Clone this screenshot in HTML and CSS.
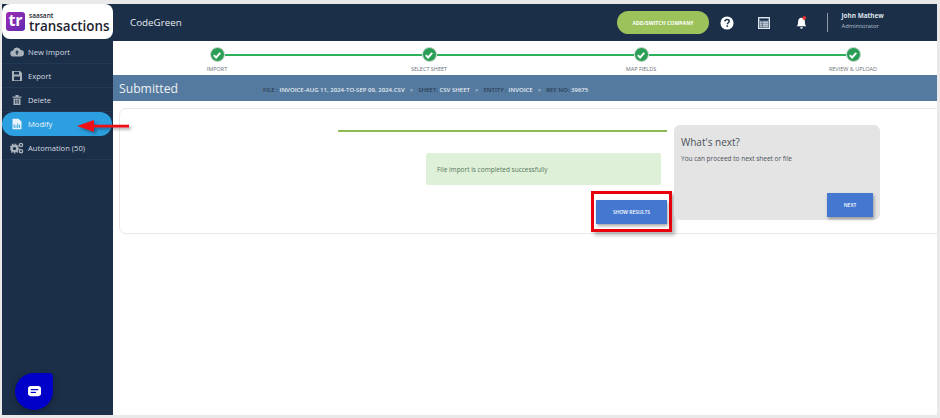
FILE: index.html
```html
<!DOCTYPE html>
<html lang="en">
<head>
<meta charset="utf-8">
<title>SaasAnt Transactions</title>
<link rel="stylesheet" href="styles.css">
</head>
<body>
<div class="frame">
  <header class="topbar">
    <div class="logo">
      <span class="logo-mark">tr</span>
      <span class="logo-words"><span class="logo-small">saasant</span><span class="logo-big">transactions</span></span>
    </div>
    <div class="company">CodeGreen</div>
    <button class="switch">ADD/SWITCH COMPANY</button>
    <svg class="ico-help" viewBox="0 0 16 16"><circle cx="8" cy="8" r="7.5" fill="#fff"/><path d="M5.600 6.200C5.700 4.800 6.700 4 8.100 4c1.400 0 2.400.8 2.400 2 0 1-.6 1.500-1.300 2-.6.4-.8.7-.8 1.400" fill="none" stroke="#1b2f49" stroke-width="1.700"/><rect x="7.400" y="10.600" width="1.800" height="1.800" fill="#1b2f49"/></svg>
    <svg class="ico-table" viewBox="0 0 12 12"><rect x=".5" y=".5" width="11" height="11" fill="#6f8296" stroke="#dfe6ee"/><rect x="2" y="2" width="8" height="1.600" fill="#1b2f49"/><path d="M2 5.200h1.600M5 5.200h5M2 7.200h1.600M5 7.200h5M2 9.200h1.600M5 9.200h5" stroke="#dfe6ee"/></svg>
    <svg class="ico-bell" viewBox="0 0 14 16"><path d="M7 2.400c-2.500 0-3.600 1.900-3.600 4 0 2.600-.5 4-1.600 5.200h10.400C11.100 10.400 10.600 9 10.600 6.400c0-2.100-1.100-4-3.600-4z" fill="#fff"/><path d="M5.500 12.600h3c0 1-.6 1.600-1.500 1.600s-1.500-.6-1.500-1.600z" fill="#fff"/><circle cx="10" cy="2.500" r="2" fill="#e8312f"/></svg>
    <div class="divider"></div>
    <div class="user"><span class="user-name">John Mathew</span><span class="user-role">Administrator</span></div>
  </header>
  <div class="body">
    <nav class="side">
      <a class="item"><svg class="ico" viewBox="0 0 14 12"><path d="M3.500 10.500a3 3 0 0 1-.4-6A4 4 0 0 1 10.700 4a3.200 3.200 0 0 1 0 6.500z" fill="#a9b1ba"/><path d="M7 4.200l2 2.300H7.700v2.200H6.300V6.500H5z" fill="#1b2f49"/></svg>New Import</a>
      <a class="item"><svg class="ico" viewBox="0 0 14 12"><path d="M2 1h8l2 2v8H2z" fill="#a9b1ba"/><rect x="4" y="1.800" width="5" height="2.700" fill="#1b2f49"/><rect x="4" y="6.500" width="6" height="3.700" fill="#1b2f49"/></svg>Export</a>
      <a class="item"><svg class="ico" viewBox="0 0 14 12"><path d="M2.500 2.500h9v1.200h-9zM5.500 1h3v1.500h-3z" fill="#a9b1ba"/><path d="M3.500 4.500h7V11h-7z" fill="#a9b1ba"/><path d="M5.500 5.700v4M7 5.700v4M8.500 5.700v4" stroke="#1b2f49" stroke-width=".7"/></svg>Delete</a>
      <a class="item active"><svg class="ico" viewBox="0 0 14 12"><path d="M2.500.8h6L11.500 3.500v7.800h-9z" fill="#e8f2fa"/><path d="M4.200 9.800V6.500M6 9.800V7.500M7.800 9.800V5.600M9.600 9.800V7" stroke="#2c9fe0"/></svg>Modify</a>
      <a class="item"><svg class="ico" viewBox="0 0 14 12"><circle cx="4.500" cy="6.500" r="2.800" fill="none" stroke="#a9b1ba" stroke-width="2.400"/><circle cx="4.500" cy="6.500" r="4.500" fill="none" stroke="#a9b1ba" stroke-width="1.200" stroke-dasharray="1.500 1.500"/><circle cx="11" cy="3" r="1.600" fill="none" stroke="#a9b1ba" stroke-width="1.400"/><circle cx="11" cy="9.200" r="1.600" fill="none" stroke="#a9b1ba" stroke-width="1.400"/></svg>Automation (50)</a>
    </nav>
    <main class="main">
      <div class="stepper">
        <div class="step"><div class="rail"><span class="seg seg-off"></span><span class="tick"><svg viewBox="0 0 10 10"><path d="M1.800 5.200l2.300 2.300 4.200-4.700" fill="none" stroke="#fff" stroke-width="1.900"/></svg></span><span class="seg"></span></div><span class="step-label">IMPORT</span></div>
        <div class="step"><div class="rail"><span class="seg"></span><span class="tick"><svg viewBox="0 0 10 10"><path d="M1.800 5.200l2.300 2.300 4.200-4.700" fill="none" stroke="#fff" stroke-width="1.900"/></svg></span><span class="seg"></span></div><span class="step-label">SELECT SHEET</span></div>
        <div class="step"><div class="rail"><span class="seg"></span><span class="tick"><svg viewBox="0 0 10 10"><path d="M1.800 5.200l2.300 2.300 4.200-4.700" fill="none" stroke="#fff" stroke-width="1.900"/></svg></span><span class="seg"></span></div><span class="step-label">MAP FIELDS</span></div>
        <div class="step"><div class="rail"><span class="seg"></span><span class="tick"><svg viewBox="0 0 10 10"><path d="M1.800 5.200l2.300 2.300 4.200-4.700" fill="none" stroke="#fff" stroke-width="1.900"/></svg></span><span class="seg seg-off"></span></div><span class="step-label">REVIEW &amp; UPLOAD</span></div>
      </div>
      <div class="banner">
        <h1 class="title">Submitted</h1>
        <div class="crumbs">
          <span><b>FILE :</b> INVOICE-AUG 11, 2024-TO-SEP 09, 2024.CSV</span><i>&gt;</i>
          <span><b>SHEET:</b> CSV SHEET</span><i>&gt;</i>
          <span><b>ENTITY :</b> INVOICE</span><i>&gt;</i>
          <span><b>REF NO:</b> 39675</span>
        </div>
      </div>
      <section class="card">
        <div class="result">
          <div class="rule"></div>
          <div class="alert">File import is completed successfully</div>
          <div class="result-action"><div class="marked"><button class="btn btn-show">SHOW RESULTS</button></div></div>
        </div>
        <aside class="next">
          <h2 class="next-title">What's next?</h2>
          <p class="next-text">You can proceed to next sheet or file</p>
          <div class="next-action"><button class="btn btn-next">NEXT</button></div>
        </aside>
      </section>
    </main>
  </div>
  <svg class="arrow" viewBox="0 0 56 14"><path d="M54 5.800H19V1L2 7l17 6V8.400h35z" fill="#ee0f17"/></svg>
  <div class="chat"><svg viewBox="0 0 16 14"><rect x="1" y="1" width="14" height="11" rx="3" fill="#fff"/><path d="M4 5h8" stroke="#0000c8" stroke-width="1.300"/><path d="M4 8h5.500" stroke="#0000c8" stroke-width="1.300"/></svg></div>
</div>
</body>
</html>
```
FILE: styles.css
```css
* { box-sizing: border-box; }
html, body { margin: 0; height: 100%; overflow: hidden; }
body { background: #e9e9e9; font-family: "Open Sans", "Liberation Sans", sans-serif; }
.frame { position: relative; width: 935px; height: 411px; margin: 4px 0 0 2px; display: flex; flex-direction: column; background: #fff; overflow: hidden; }

.topbar { flex: none; height: 37px; background: #1b2f49; display: flex; align-items: center; color: #fff; }
.logo { flex: none; width: 111px; height: 35px; margin-top: -2px; background: #fff; border-radius: 8px; display: flex; align-items: center; padding-left: 4px; gap: 4px; }
.logo-mark { width: 19px; height: 19px; border-radius: 3px; background: linear-gradient(135deg, #a02bb5, #5e2bb0); color: #fff; font: 700 16px/17px "Open Sans", sans-serif; text-align: center; }
.logo-words { display: flex; flex-direction: column; gap: 1px; color: #1d2430; }
.logo-small { font: 600 6.500px/7px "Open Sans", sans-serif; }
.logo-big { font: 600 13.400px/12px "Open Sans", sans-serif; }
.company { flex: none; margin-left: 17px; font-size: 9.800px; color: #e7ebef; width: 487px; }
.switch { flex: none; width: 92px; height: 23px; border: 0; border-radius: 12px; background: #9bc25b; color: #fff; font: 700 5.200px "Open Sans", sans-serif; padding: 0; }
.ico-help { flex: none; width: 14px; height: 14px; margin-left: 11px; }
.ico-table { flex: none; width: 12px; height: 12px; margin-left: 24px; }
.ico-bell { flex: none; width: 13px; height: 16px; margin-left: 24.500px; }
.divider { flex: none; width: 1px; height: 19px; background: #8e9aa8; margin-left: 19.500px; }
.user { display: flex; flex-direction: column; margin-left: 13.500px; margin-top: -4px; }
.user-name { font-size: 6.400px; line-height: 8px; font-weight: 700; color: #dfe4ea; }
.user-role { font-size: 5.800px; line-height: 8px; margin-top: 2px; color: #b8c1cc; }

.body { flex: 1; display: flex; min-height: 0; }
.side { flex: none; width: 111px; background: #1b2f49; margin-top: -1px; }
.item { display: flex; align-items: center; height: 24px; font-size: 7.600px; font-weight: 500; color: #d5dae0; padding-left: 8px; border-bottom: 1px solid #223954; }
.item.active { background: #2c9fe0; border-radius: 12px; border-bottom: 0; color: #eef6fc; margin-right: 1px; }
.ico { width: 14px; height: 12px; margin-right: 4px; flex: none; }

.main { flex: 1; min-width: 0; overflow: hidden; }
.stepper { display: grid; grid-template-columns: repeat(4, 212px); margin-left: -2px; height: 34px; padding-top: 6px; }
.step { display: flex; flex-direction: column; align-items: center; }
.rail { width: 100%; display: flex; align-items: center; height: 15px; }
.seg { flex: 1; height: 2px; background: #2fb15b; }
.seg-off { background: transparent; }
.tick { flex: none; width: 15px; height: 15px; border-radius: 50%; background: #2a9e54; border: 1px solid #cfd6d2; display: flex; align-items: center; justify-content: center; }
.tick svg { width: 10px; height: 10px; }
.step-label { font-size: 5.500px; line-height: 7px; margin-top: 4px; color: #69717a; }

.banner { height: 26px; background: #557a9f; display: flex; align-items: center; padding-left: 6px; }
.title { margin: 0; flex: none; width: 144px; font-size: 12.200px; font-weight: 400; color: #edf1f5; }
.crumbs { display: flex; align-items: center; gap: 5px; font-size: 6.050px; font-weight: 600; color: #e4eaf1; margin-top: 3px; white-space: nowrap; }
.crumbs b { font-weight: 600; color: #2a3d55; }
.crumbs i { font-style: normal; color: #c7d3df; }

.card { display: flex; align-items: flex-start; margin: 7px 0 0 6px; height: 126px; width: 830px; border: 1px solid #e9e9e9; border-radius: 7px; }
.result { flex: none; width: 547px; padding-top: 21px; }
.rule { height: 2px; background: #8cbb52; margin-left: 218px; }
.alert { margin: 21px 6px 0 306px; height: 32px; background: #dff0d8; border-radius: 2px; display: flex; align-items: center; padding-left: 11px; font-size: 6.500px; color: #55755a; }
.result-action { display: flex; justify-content: flex-end; margin: 6px -5px 0 0; }
.marked { display: flex; border: 3px solid #e8000c; padding: 6px 2px 4.500px; box-shadow: 3px 3px 4px rgba(0,0,0,.3); }
.btn { border: 0; background: #4477d0; color: #fff; font: 600 5px "Open Sans", sans-serif; padding: 0; box-shadow: 1px 2px 3px rgba(0,0,0,.35); }
.btn-show { width: 71px; height: 24px; }
.next { flex: none; width: 206px; height: 95px; margin: 16px 0 0 7px; background: #e4e4e4; border-radius: 6px; padding: 10px 7px 0; display: flex; flex-direction: column; }
.next-title { margin: 0; font-size: 10px; font-weight: 400; line-height: 14px; color: #4b5159; }
.next-text { margin: 6px 0 0; font-size: 6.500px; line-height: 8px; color: #4b5159; }
.next-action { display: flex; justify-content: flex-end; margin-top: 30px; }
.btn-next { width: 46px; height: 24px; }

.arrow { position: absolute; left: 73px; top: 115px; width: 56px; height: 14px; filter: drop-shadow(2px 2px 1.500px rgba(0,0,0,.35)); }
.chat { position: absolute; left: 13px; top: 369px; width: 38px; height: 37px; background: #0000c8; border-radius: 50% 4px 50% 50%; display: flex; align-items: center; justify-content: center; box-shadow: 0 2px 6px rgba(0,0,0,.3); }
.chat svg { width: 15px; height: 13px; }
```
